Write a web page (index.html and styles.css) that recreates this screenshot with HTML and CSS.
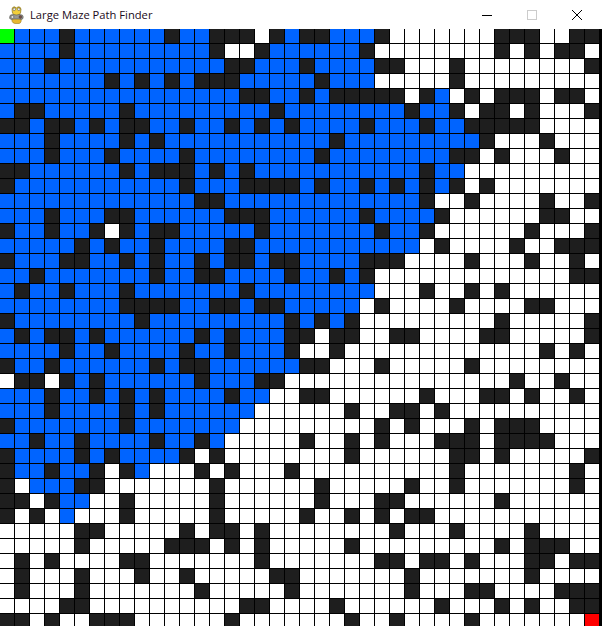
FILE: index.html
```html
<!DOCTYPE html>
<html lang="en">
<head>
<meta charset="utf-8">
<title>Large Maze Path Finder</title>
<link rel="stylesheet" href="styles.css">
</head>
<body>
<div class="window">
  <header class="titlebar">
    <svg class="app-icon" width="15" height="18" viewBox="0 0 15 18" aria-hidden="true">
      <path d="M3 11 Q2 17 6 17.5 L10 17.5 Q13 17 12 11Z" fill="#e8b830" stroke="#9a7a20" stroke-width=".6"/>
      <path d="M3.5 7 Q2.5 2 4 1.2 Q6 .2 7.3 2 Q9 .2 11 1.2 Q12.8 2.2 11.5 7 Q10 10 7.5 10 Q5 10 3.5 7Z" fill="#f2cf3a" stroke="#8a7420" stroke-width=".7"/>
      <circle cx="5.2" cy="3.2" r="1.3" fill="#fff" stroke="#333" stroke-width=".5"/>
      <circle cx="9.8" cy="3.2" r="1.3" fill="#fff" stroke="#333" stroke-width=".5"/>
      <path d="M1.5 9 Q.2 11 .7 12.5 Q2 14 5 13 L10 13 Q13 14 14 12.5 Q14.7 10.5 13.3 9 Q10 8 7.5 9 Q4 8 1.5 9Z" fill="#9a9a94" stroke="#55554f" stroke-width=".6"/>
      <circle cx="3.4" cy="11" r="1.5" fill="#e4e4de" stroke="#444" stroke-width=".5"/>
      <circle cx="11.4" cy="11" r="1.4" fill="#7a4a42" stroke="#444" stroke-width=".5"/>
    </svg>
    <span class="title">Large Maze Path Finder</span>
    <div class="controls">
      <span class="control"><svg width="10" height="10" viewBox="0 0 10 10" aria-hidden="true"><path d="M0 5.5H10" stroke="#000" stroke-width="1"/></svg></span>
      <span class="control"><svg width="10" height="10" viewBox="0 0 10 10" aria-hidden="true"><rect x=".5" y=".5" width="9" height="9" fill="none" stroke="#ccc" stroke-width="1"/></svg></span>
      <span class="control"><svg width="10" height="10" viewBox="0 0 10 10" aria-hidden="true"><path d="M0 0L10 10M10 0L0 10" stroke="#000" stroke-width="1"/></svg></span>
    </div>
  </header>
  <main class="maze" id="maze"></main>
</div>
<script src="script.js"></script>
</body>
</html>
```
FILE: styles.css
```css
html, body {
  margin: 0;
  height: 100%;
  overflow: hidden;
  background: #fff;
}

.window {
  width: 602px;
  height: 626px;
  overflow: hidden;
  display: flex;
  flex-direction: column;
}

.titlebar {
  flex: 0 0 29px;
  display: flex;
  align-items: center;
  background: #fff;
  padding-left: 9px;
  padding-right: 3px;
}

.app-icon {
  flex: none;
  margin-right: 6px;
}

.title {
  flex: 1;
  font-family: "Open Sans", "Noto Sans", sans-serif;
  font-size: 11.2px;
  color: #1a0a20;
  white-space: nowrap;
}

.controls {
  display: flex;
}

.control {
  width: 45px;
  height: 29px;
  display: flex;
  align-items: center;
  justify-content: center;
}

.maze {
  flex: none;
  display: grid;
  grid-template-columns: repeat(40, 14px);
  grid-auto-rows: 14px;
  gap: 1px;
  width: 600px;
  padding-right: 2px;
  background: #000;
}

.cell-open { background: #fff; }
.cell-wall { background: #1e1e1e; }
.cell-path { background: #0064ff; }
.cell-start { background: #00ff00; }
.cell-end { background: #ff0000; }
```
FILE: script.js
```js
var rows = [
  "Gbbb#bbbbbb#bb" + "###.#b##bbb#." + "......###..##",
  "bbbb#bbbbbbbbb" + "#..#bbbbbb#.." + "......#.#.##.",
  "bbb#bbbbbbbbbb" + "b##bbb#bbbb##" + "...#........#",
  "bbbbbbb#b#b#b#" + "##bbbbb#bbb.." + "...#.........",
  "bbbbbbbbbbbbbb" + "bb##bb#b#####" + ".#b.#.###.##.",
  "b##bbbbb#bbbbb" + "bbbb#bbbbbbbb" + "#bb#.##.#...#",
  "##b##b#b##bb#b" + "b#b#b#bbbb#bb" + "b#bb#####....",
  "bbb#bbbb#b#bbb" + "bbbbbbbb#bbbb" + "bbbbb#...#...",
  "bbb#bbb#bbbb#b" + "bbbbbbb#bbbbb" + "bbb##.#...#..",
  "##bbbbbb#b###b" + "#b#bbbbbbbbbb" + "b#bb.........",
  "#bbbbbbbbbbb#b" + "bb####b#bb#b#" + "b#b#.#.......",
  "bbbbbbbbbbbbb#" + "#bbbbbbbbbbbb" + "b#..#....#..#",
  "bbb#bbb##bbbbb" + "b###bbbbbb#bb" + "bb#......##..",
  "#bb#bb#.#b##bb" + "bbb#bbbbbbb#b" + "b#......#...#",
  "bbbbb#b#bb#bbb" + "b##bbbbbbbbbb" + "b.#....#..###",
  "#bbb##bb#b#bb#" + "b##b##bbbb###" + "....#...#..#.",
  "bb#bbbbbbb#bb#" + "#bbbb#bb#b#.." + "...........##",
  "b#bb#bbb#bbbbb" + "bb#bbbbbbbb.." + ".#..#.#......",
  "bbbbbbbb####bb" + "##b##bbbbb.#." + "...#....##...",
  "#bbbbbbbb#bbbb" + "bbbbb#b#b#..." + "......#.....#",
  "b#b##b#bbbbbb#" + "b#bbb##.##..#" + "#....##.....#",
  "bbbb#bb#bbbb#b" + "b#bbb#..#...." + ".........#.#.",
  "#bb#bbbbbb#b##" + "bbbbbb##...#." + "....#........",
  ".##.#b#bbbbbb#" + "bbb##........" + ".......#..#..",
  "bbb#bb#b#b#bbb" + "b#bb..##....." + ".#...##.#..#.",
  "bbb#bbbb#b#bbb" + "bbb......#..#" + "#.#..........",
  "#bbbbbbb#bbbbb" + "bb.........#." + "#...#.###....",
  "bb#bb#bbbb#bb#" + "b.....#..#.#." + "..###.####...",
  "#bbbb#b#bbbb#." + "#........#..." + "...##.#.....#",
  "#bb#bb#.#b...#" + ".#...#......." + "...#.......#.",
  "#.bbb##......." + "#......#....." + "#..#.......#.",
  "##.#bb..#....." + "#......#...##" + "......#......",
  "#.#.b...#....." + "#.....#..#.#." + "##...........",
  ".....##.....#." + "##.#........#" + "...#....#....",
  ".....#.....###" + ".#.#.....#..." + "......#.###..",
  ".#.#....##...." + "...#.......##" + ".##.#...##.##",
  ".#...#...#..#." + "....##......." + "#.......#....",
  ".#...#.......#" + ".....#......." + "#...##....###",
  "....##........" + "..##....#...." + "..#...#.#..##",
  "##.#..###....." + ".#.......#..#" + "....#.......R"
];

var kinds = {
  ".": "cell-open",
  "#": "cell-wall",
  "b": "cell-path",
  "G": "cell-start",
  "R": "cell-end"
};

var maze = document.getElementById("maze");
rows.forEach(function (row) {
  row.split("").forEach(function (ch) {
    var cell = document.createElement("div");
    cell.className = kinds[ch];
    maze.appendChild(cell);
  });
});
```
